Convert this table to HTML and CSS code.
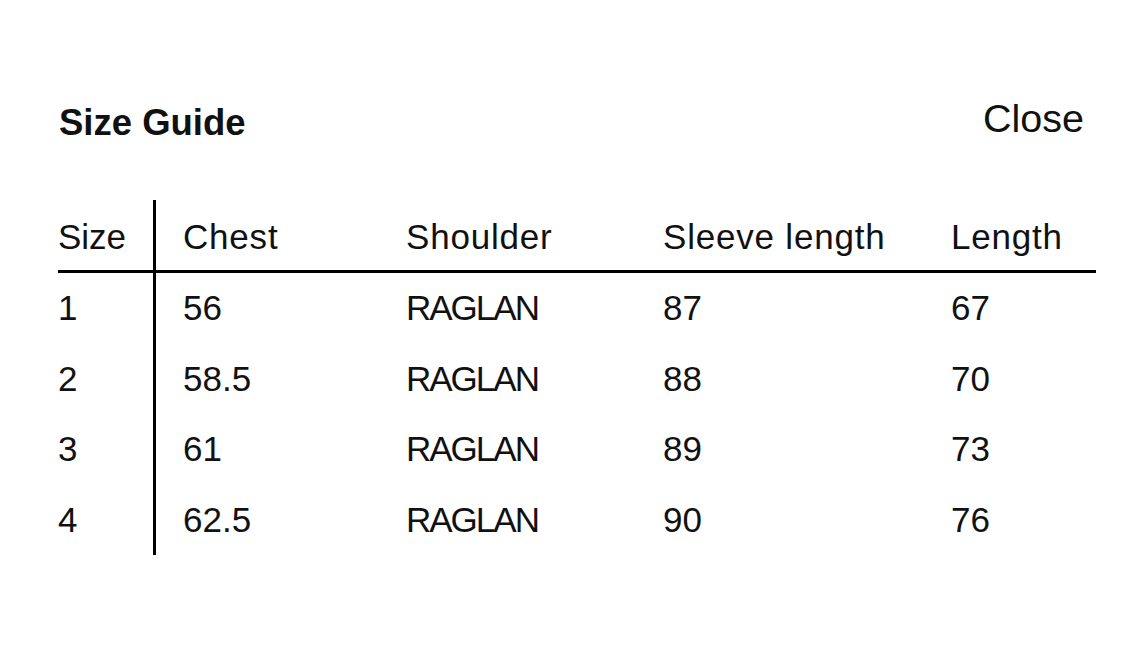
FILE: index.html
```html
<!DOCTYPE html>
<html lang="en">
<head>
<meta charset="utf-8">
<title>Size Guide</title>
<link rel="stylesheet" href="styles.css">
</head>
<body>
<div class="page">
  <div class="topbar">
    <h1 class="title">Size Guide</h1>
    <button class="close" type="button">Close</button>
  </div>
  <div class="table" role="table">
    <div class="cell head first">Size</div>
    <div class="cell head">Chest</div>
    <div class="cell head">Shoulder</div>
    <div class="cell head">Sleeve length</div>
    <div class="cell head">Length</div>

    <div class="cell first">1</div>
    <div class="cell">56</div>
    <div class="cell caps">RAGLAN</div>
    <div class="cell">87</div>
    <div class="cell">67</div>

    <div class="cell first">2</div>
    <div class="cell">58.5</div>
    <div class="cell caps">RAGLAN</div>
    <div class="cell">88</div>
    <div class="cell">70</div>

    <div class="cell first">3</div>
    <div class="cell">61</div>
    <div class="cell caps">RAGLAN</div>
    <div class="cell">89</div>
    <div class="cell">73</div>

    <div class="cell first">4</div>
    <div class="cell">62.5</div>
    <div class="cell caps">RAGLAN</div>
    <div class="cell">90</div>
    <div class="cell">76</div>
  </div>
</div>
</body>
</html>
```

FILE: styles.css
```css
* { box-sizing: border-box; }

html, body {
  margin: 0;
  padding: 0;
  background: #ffffff;
}

body {
  font-family: "Liberation Sans", Arial, sans-serif;
  color: #111111;
}

.page {
  width: 1125px;
  height: 659px;
  padding: 100px 0 0 58px;
}

.topbar {
  height: 100px;
  display: flex;
  justify-content: space-between;
  align-items: flex-start;
  padding-right: 41px;
}

.title {
  margin: 5px 0 0 1px;
  font-size: 36.5px;
  line-height: 36.5px;
  font-weight: 700;
}

.close {
  margin: 0;
  padding: 0;
  border: 0;
  background: none;
  font-family: inherit;
  color: inherit;
  font-size: 39.5px;
  line-height: 39.5px;
  margin-top: -1px;
  cursor: pointer;
}

.table {
  display: grid;
  grid-template-columns: 98px 223px 257px 288px 172px;
  grid-auto-rows: 70.5px;
  grid-template-rows: 72.5px;
  width: 1038px;
}

.cell {
  font-size: 35px;
  line-height: 35px;
  padding: 17.9px 0 0 27px;
  white-space: nowrap;
}

.cell.head {
  padding-top: 19.4px;
  border-bottom: 3px solid #000000;
  letter-spacing: 0.8px;
}

.cell.first {
  padding-left: 0;
  border-right: 3px solid #000000;
  letter-spacing: 0;
}

.caps {
  letter-spacing: -2px;
}
```
